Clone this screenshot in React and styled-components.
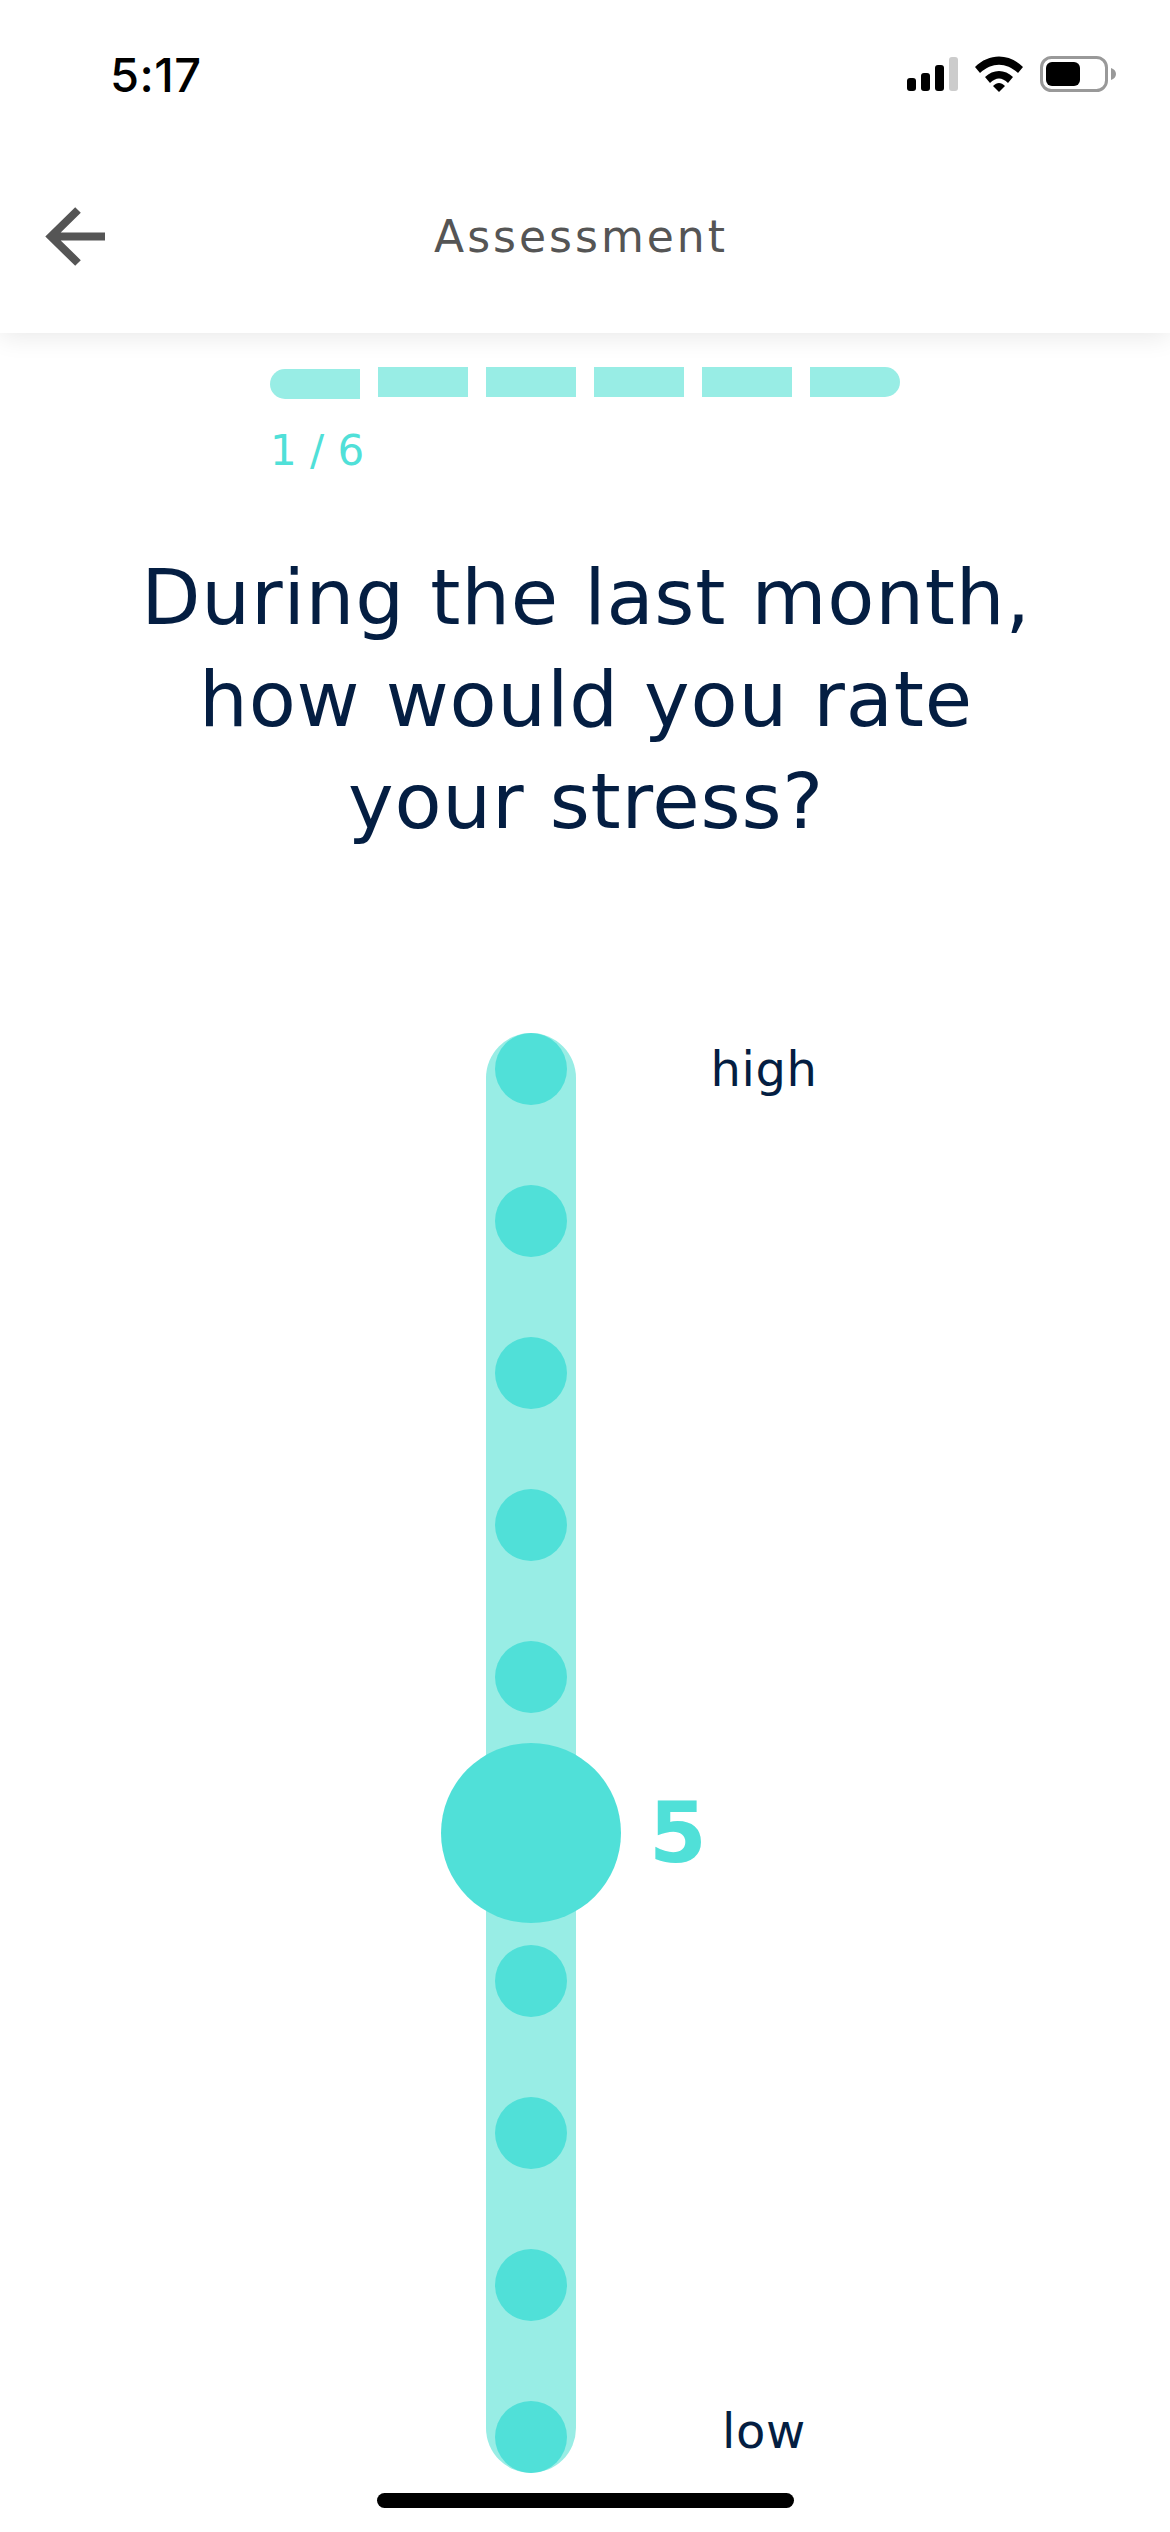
import React from "react";
import styled, { createGlobalStyle } from "styled-components";

const TEAL = "#50e0d8";
const TEAL_LIGHT = "#98ede5";
const NAVY = "#041e42";
const GREY = "#555555";

const SEGMENTS = [0, 1, 2, 3, 4, 5];
const DOTS = [0, 1, 2, 3, 4, 5, 6, 7, 8, 9];

const App = () => {
  return (
    <Div_page>
      <GlobalStyle />
      <Div_header>
        <Div_status>
          <Span_time>5:17</Span_time>
          <Div_statusIcons>
            <svg width="51" height="34" viewBox="0 0 51 34">
              <rect x="0" y="21" width="9" height="13" rx="3" fill="#000" />
              <rect x="14" y="16" width="9" height="18" rx="3" fill="#000" />
              <rect x="28" y="8" width="9" height="26" rx="3" fill="#000" />
              <rect x="42" y="0" width="9" height="34" rx="3" fill="#ccc" />
            </svg>
            <svg width="48" height="36" viewBox="0 0 48 36">
              <path d="M0 11 C14 -3 34 -3 48 11 L43 17 C31 6 17 6 5 17 Z" fill="#000" />
              <path d="M10 21 C18 13 30 13 38 21 L33 27 C27 21 21 21 15 27 Z" fill="#000" />
              <path d="M18 30 C22 26 26 26 30 30 L24 36 Z" fill="#000" />
            </svg>
            <svg width="76" height="36" viewBox="0 0 76 36">
              <rect x="1.5" y="1.5" width="65" height="33" rx="10" fill="none" stroke="#999" strokeWidth="3" />
              <rect x="6" y="6" width="34" height="24" rx="6" fill="#000" />
              <path d="M71 12 C74 13 76 15 76 18 C76 21 74 23 71 24 Z" fill="#999" />
            </svg>
          </Div_statusIcons>
        </Div_status>
        <Div_nav>
          <Svg_back viewBox="0 0 60 60">
            <path d="M33 3 L6 29.5 L33 56 M6 29.5 H60" fill="none" stroke={GREY} strokeWidth="8" />
          </Svg_back>
          <Span_navTitle>Assessment</Span_navTitle>
        </Div_nav>
      </Div_header>

      <Div_progress>
        <Div_segments>
          {SEGMENTS.map((i) => (
            <Div_segment key={i} $first={i === 0} $last={i === 5} />
          ))}
        </Div_segments>
        <Span_count>1 / 6</Span_count>
      </Div_progress>

      <H1_question>
        During the last month,
        <br />
        how would you rate
        <br />
        your stress?
      </H1_question>

      <Div_scale>
        <Div_track>
          {DOTS.map((i) => (
            <Div_dot key={i} />
          ))}
          <Div_knob />
          <Span_value>5</Span_value>
        </Div_track>
        <Div_labels>
          <Span_label>high</Span_label>
          <Span_label>low</Span_label>
        </Div_labels>
      </Div_scale>

      <Div_homeBar />
    </Div_page>
  );
};

const GlobalStyle = createGlobalStyle`
  html, body {
    margin: 0;
    padding: 0;
    background: #fff;
  }
`;

const Div_page = styled.div`
  width: 1170px;
  height: 2532px;
  overflow: hidden;
  position: relative;
  background: #fff;
  font-family: "DejaVu Sans", "Liberation Sans", sans-serif;
`;

const Div_header = styled.div`
  height: 333px;
  background: #fff;
  box-shadow: 0 4px 24px rgba(0, 0, 0, 0.09);
`;

const Div_status = styled.div`
  height: 148px;
  padding: 0 54px 0 110px;
  display: flex;
  align-items: center;
  justify-content: space-between;
`;

const Span_time = styled.span`
  font-family: "Inter", sans-serif;
  font-size: 47px;
  font-weight: 500;
  letter-spacing: 0.5px;
  color: #000;
`;

const Div_statusIcons = styled.div`
  display: flex;
  align-items: center;
  gap: 17px;
`;

const Div_nav = styled.div`
  height: 176px;
  position: relative;
  display: flex;
  align-items: center;
  justify-content: center;
`;

const Svg_back = styled.svg`
  position: absolute;
  left: 45px;
  top: 59px;
  width: 60px;
  height: 60px;
`;

const Span_navTitle = styled.span`
  font-size: 44px;
  font-weight: 400;
  letter-spacing: 3px;
  color: ${GREY};
  margin-right: 8px;
`;

const Div_progress = styled.div`
  padding: 34px 0 0 270px;
`;

const Div_segments = styled.div`
  display: flex;
  gap: 18px;
`;

const Div_segment = styled.div`
  width: 90px;
  height: 30px;
  background: ${TEAL_LIGHT};
  transform: translateY(${(p) => (p.$first ? "2px" : "0")});
  border-radius: ${(p) =>
    p.$first ? "15px 0 0 15px" : p.$last ? "0 15px 15px 0" : "0"};
`;

const Span_count = styled.div`
  margin-top: 28px;
  font-size: 42px;
  line-height: 52px;
  font-weight: 400;
  color: ${TEAL};
`;

const H1_question = styled.h1`
  margin: 70px 0 0;
  padding-left: 2px;
  text-align: center;
  font-size: 77px;
  line-height: 102px;
  font-weight: 400;
  letter-spacing: 0.8px;
  color: ${NAVY};
`;

const Div_scale = styled.div`
  margin: 180px 0 0 486px;
  display: flex;
  align-items: stretch;
`;

const Div_track = styled.div`
  position: relative;
  width: 90px;
  height: 1440px;
  border-radius: 45px;
  background: ${TEAL_LIGHT};
  display: flex;
  flex-direction: column;
  align-items: center;
  justify-content: space-between;
`;

const Div_dot = styled.div`
  width: 72px;
  height: 72px;
  border-radius: 50%;
  background: ${TEAL};
`;

const Div_knob = styled.div`
  position: absolute;
  left: -45px;
  top: 710px;
  width: 180px;
  height: 180px;
  border-radius: 50%;
  background: ${TEAL};
`;

const Span_value = styled.span`
  position: absolute;
  left: 163px;
  top: 756px;
  font-size: 83px;
  line-height: 90px;
  font-weight: 700;
  color: ${TEAL};
`;

const Div_labels = styled.div`
  width: 270px;
  padding: 6px 0 12px;
  display: flex;
  flex-direction: column;
  justify-content: space-between;
  align-items: flex-end;
`;

const Span_label = styled.span`
  width: 164px;
  text-align: center;
  font-size: 48px;
  line-height: 60px;
  letter-spacing: 0.6px;
  color: ${NAVY};
`;

const Div_homeBar = styled.div`
  position: absolute;
  left: 377px;
  top: 2493px;
  width: 417px;
  height: 15px;
  border-radius: 8px;
  background: #000;
`;

export default App;
